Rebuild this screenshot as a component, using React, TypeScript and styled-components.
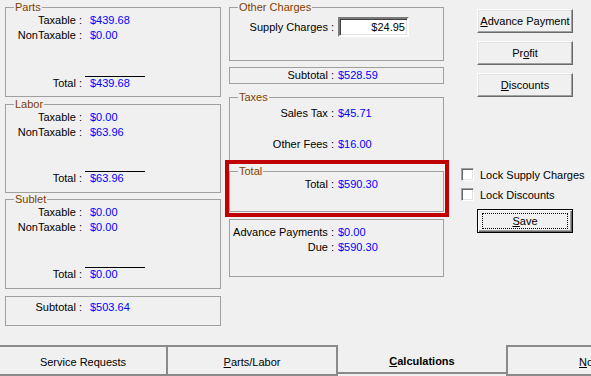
import React from 'react';
import styled, { createGlobalStyle } from 'styled-components';

const GlobalStyle = createGlobalStyle`
  html, body {
    margin: 0;
    padding: 0;
    background: #f0f0f0;
  }
  body {
    font-family: "Liberation Sans", Arial, sans-serif;
    font-size: 11px;
    color: #000;
  }
`;

const Screen = styled.div`
  position: relative;
  width: 591px;
  height: 376px;
  overflow: hidden;
  background: #f0f0f0;
  display: flex;
  flex-direction: column;
`;

const Main = styled.div`
  box-sizing: border-box;
  height: 345px;
  display: flex;
  padding: 1px 0 0 5px;
`;

const Column = styled.div<{ $w: number; $ml?: number }>`
  width: ${(p) => p.$w}px;
  margin-left: ${(p) => p.$ml ?? 0}px;
  flex-shrink: 0;
  display: flex;
  flex-direction: column;
`;

const Group = styled.fieldset<{ $h: number; $mt?: number }>`
  box-sizing: border-box;
  height: ${(p) => p.$h}px;
  margin: ${(p) => p.$mt ?? 0}px 0 0 0;
  padding: 0;
  border: 1px solid #a0a0a0;
  min-width: 0;
`;

const Legend = styled.legend`
  margin-left: 8px;
  padding: 0 1px;
  color: #7f3f00;
  line-height: 13px;
`;

const Rows = styled.div<{ $pt?: number; $gap?: number }>`
  display: flex;
  flex-direction: column;
  margin-top: ${(p) => p.$pt ?? -1}px;
  gap: ${(p) => p.$gap ?? 0}px;
`;

const Row = styled.div<{ $labelW: number; $gap: number; $lh?: number }>`
  display: grid;
  grid-template-columns: ${(p) => p.$labelW}px auto;
  column-gap: ${(p) => p.$gap}px;
  align-items: center;
  line-height: ${(p) => p.$lh ?? 15}px;
  white-space: nowrap;
`;

const Label = styled.span`
  text-align: right;
`;

const Value = styled.span`
  color: #0000ff;
`;

const Rule = styled.div<{ $mt: number }>`
  width: 60px;
  height: 1px;
  margin: ${(p) => p.$mt}px 0 0 79px;
  background: #000;
`;

const TextBox = styled.div`
  box-sizing: border-box;
  width: 71px;
  height: 20px;
  background: #fff;
  border: 2px solid;
  border-color: #7a7a7a #fff #fff #7a7a7a;
  box-shadow: inset 1px 1px 0 #404040, inset -1px -1px 0 #e3e3e3;
  text-align: right;
  padding-right: 2px;
  line-height: 16px;
`;

const Button = styled.button<{ $mt: number; $default?: boolean }>`
  box-sizing: border-box;
  width: 96px;
  height: 24px;
  margin: ${(p) => p.$mt}px 0 0 16px;
  padding: 0;
  font: inherit;
  color: #000;
  background: #f0f0f0;
  border: 1px solid;
  border-color: ${(p) => (p.$default ? '#000' : '#fff #696969 #696969 #fff')};
  box-shadow: ${(p) =>
    p.$default
      ? 'inset 1px 1px 0 #fff, inset -1px -1px 0 #696969, inset -2px -2px 0 #a0a0a0'
      : 'inset -1px -1px 0 #a0a0a0, inset 1px 1px 0 #e3e3e3'};
  display: flex;
  align-items: center;
  justify-content: center;
`;

const Focus = styled.span`
  box-sizing: border-box;
  width: 86px;
  height: 16px;
  border: 1px dotted #000;
  display: flex;
  align-items: center;
  justify-content: center;
`;

const CheckRow = styled.label<{ $mt: number }>`
  display: flex;
  align-items: center;
  gap: 6px;
  height: 13px;
  margin-top: ${(p) => p.$mt}px;
  white-space: nowrap;
`;

const CheckBox = styled.span`
  box-sizing: border-box;
  width: 13px;
  height: 13px;
  background: #fff;
  border: 1px solid;
  border-color: #a0a0a0 #fff #fff #a0a0a0;
  box-shadow: inset 1px 1px 0 #696969, inset -1px -1px 0 #e3e3e3;
`;

const TabStrip = styled.div`
  display: flex;
  height: 31px;
`;

const Tab = styled.div<{ $w?: number; $active?: boolean; $side?: 'left' | 'right'; $pl?: number }>`
  box-sizing: border-box;
  ${(p) => (p.$w ? `width: ${p.$w}px; flex-shrink: 0;` : 'flex: 1; min-width: 0;')}
  height: ${(p) => (p.$active ? 29 : 31)}px;
  display: flex;
  align-items: center;
  justify-content: ${(p) => (p.$pl ? 'flex-start' : 'center')};
  padding-left: ${(p) => p.$pl ?? 0}px;
  font-weight: ${(p) => (p.$active ? 'bold' : 'normal')};
  border: 0 solid #8a8a8a;
  border-top-width: ${(p) => (p.$active ? 0 : 2)}px;
  border-bottom-width: 2px;
  border-right-width: ${(p) => (p.$side === 'right' ? 2 : 0)}px;
  border-left-width: ${(p) => (p.$side === 'left' ? 2 : 0)}px;
  padding-top: ${(p) => (p.$active ? 4 : 2)}px;
  white-space: nowrap;
  overflow: hidden;
`;

const Highlight = styled.div`
  position: absolute;
  left: 225px;
  top: 160px;
  width: 224px;
  height: 57px;
  box-sizing: border-box;
  border: 4px solid #c00000;
  pointer-events: none;
`;

type Line = [string, string];

function LeftGroup({
  title,
  lines,
  total,
  h,
  mt,
  gap
}: {
  title: string;
  lines: Line[];
  total: string;
  h: number;
  mt?: number;
  gap: number;
}) {
  return (
    <Group $h={h} $mt={mt}>
      <Legend>{title}</Legend>
      <Rows>
        {lines.map(([l, v]) => (
          <Row key={l} $labelW={76} $gap={8}>
            <Label>{l} :</Label>
            <Value>{v}</Value>
          </Row>
        ))}
      </Rows>
      <Rule $mt={gap} />
      <Row $labelW={76} $gap={8} $lh={13}>
        <Label>Total :</Label>
        <Value>{total}</Value>
      </Row>
    </Group>
  );
}

function MidRow({ label, value }: { label: string; value: string }) {
  return (
    <Row $labelW={104} $gap={4}>
      <Label>{label} :</Label>
      <Value>{value}</Value>
    </Row>
  );
}

export default function App() {
  return (
    <Screen>
      <GlobalStyle />
      <Main>
        <Column $w={216}>
          <LeftGroup title="Parts" h={96} gap={33} lines={[['Taxable', '$439.68'], ['NonTaxable', '$0.00']]} total="$439.68" />
          <LeftGroup title="Labor" h={95} mt={1} gap={31} lines={[['Taxable', '$0.00'], ['NonTaxable', '$63.96']]} total="$63.96" />
          <LeftGroup title="Sublet" h={96} gap={32} lines={[['Taxable', '$0.00'], ['NonTaxable', '$0.00']]} total="$0.00" />
          <Group $h={30} $mt={7}>
            <Rows $pt={3}>
              <Row $labelW={76} $gap={8}>
                <Label>Subtotal :</Label>
                <Value>$503.64</Value>
              </Row>
            </Rows>
          </Group>
        </Column>

        <Column $w={215} $ml={8}>
          <Group $h={60}>
            <Legend>Other Charges</Legend>
            <Rows $pt={3}>
              <Row $labelW={104} $gap={4} $lh={20}>
                <Label>Supply Charges :</Label>
                <TextBox>$24.95</TextBox>
              </Row>
            </Rows>
          </Group>
          <Group $h={17} $mt={6}>
            <MidRow label="Subtotal" value="$528.59" />
          </Group>
          <Group $h={71} $mt={7}>
            <Legend>Taxes</Legend>
            <Rows $pt={2} $gap={16}>
              <MidRow label="Sales Tax" value="$45.71" />
              <MidRow label="Other Fees" value="$16.00" />
            </Rows>
          </Group>
          <Group $h={47} $mt={3}>
            <Legend>Total</Legend>
            <Rows>
              <MidRow label="Total" value="$590.30" />
            </Rows>
          </Group>
          <Group $h={58} $mt={7}>
            <Rows $pt={5}>
              <MidRow label="Advance Payments" value="$0.00" />
              <MidRow label="Due" value="$590.30" />
            </Rows>
          </Group>
        </Column>

        <Column $w={130} $ml={17}>
          <Button $mt={8}>
            <span><u>A</u>dvance Payment</span>
          </Button>
          <Button $mt={8}>
            <span>Pr<u>o</u>fit</span>
          </Button>
          <Button $mt={8}>
            <span><u>D</u>iscounts</span>
          </Button>
          <CheckRow $mt={71}>
            <CheckBox />
            Lock Supply Charges
          </CheckRow>
          <CheckRow $mt={7}>
            <CheckBox />
            Lock Discounts
          </CheckRow>
          <Button $mt={8} $default>
            <Focus>
              <span><u>S</u>ave</span>
            </Focus>
          </Button>
        </Column>
      </Main>

      <TabStrip>
        <Tab $w={168} $side="right">Service Requests</Tab>
        <Tab $w={170} $side="right"><span><u>P</u>arts/Labor</span></Tab>
        <Tab $w={168} $active><span><u>C</u>alculations</span></Tab>
        <Tab $side="left" $pl={71}><span><u>N</u>otes</span></Tab>
      </TabStrip>

      <Highlight />
    </Screen>
  );
}
